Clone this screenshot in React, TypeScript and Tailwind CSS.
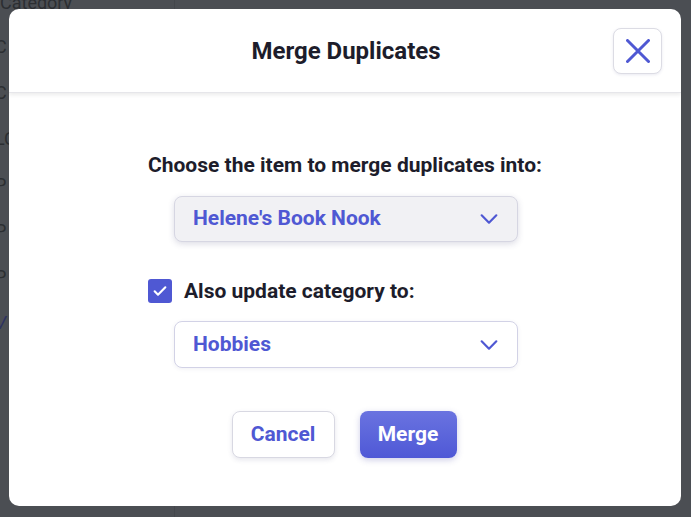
import React from "react";

const Chevron = () => (
  <svg width="22" height="22" viewBox="0 0 24 24" fill="none" stroke="#4f58d3" strokeWidth="2.4" strokeLinecap="round" strokeLinejoin="round">
    <path d="M4 8l8 8 8-8" />
  </svg>
);

export default function App() {
  const font = { fontFamily: "Roboto, 'Noto Sans', sans-serif" };
  return (
    <div className="relative h-[517px] w-[691px] overflow-hidden bg-[#4b4e53]" style={font}>
      {/* background page under overlay */}
      <div className="flex h-full">
        <div className="flex w-[175px] flex-col border-r border-[#44474c] text-[18px] text-[#2c2e32]">
          <div className="-mt-[9px] leading-[24px]">Category</div>
          <div className="-ml-[5px] mt-[20px] flex flex-col gap-[22px] leading-[24px]">
            <span>C</span>
            <span>C</span>
            <span>LC</span>
            <span>P</span>
            <span>P</span>
            <span>P</span>
            <span className="italic text-[#2d3160]">V</span>
          </div>
        </div>
        <div className="flex-1" />
      </div>

      {/* modal */}
      <div className="absolute left-[9px] top-[9px] flex h-[497px] w-[672px] flex-col overflow-hidden rounded-[10px] bg-white">
        <div className="grid h-[84px] shrink-0 grid-cols-[1fr_auto_1fr] items-center border-b border-[#e6e6ea] shadow-[0_2px_4px_rgba(0,0,0,0.08)]">
          <div />
          <div className="pl-[2px] text-[24px] font-bold leading-[30px] text-[#1d1d2b]">Merge Duplicates</div>
          <div className="flex justify-end pr-[19px]">
            <button className="flex h-[46px] w-[49px] items-center justify-center rounded-[8px] border border-[#dcdce4] bg-white shadow-[0_1px_3px_rgba(80,80,140,0.12)]">
              <svg width="24" height="24" viewBox="0 0 24 24" fill="none" stroke="#4f58d3" strokeWidth="3" strokeLinecap="round">
                <path d="M1.5 1.5l21 21M22.5 1.5l-21 21" />
              </svg>
            </button>
          </div>
        </div>

        <div className="flex flex-1 flex-col items-center pt-[59px]">
          <div className="flex w-[394px] flex-col">
            <div className="whitespace-nowrap text-[21px] font-bold leading-[26px] text-[#1d1d2b]">Choose the item to merge duplicates into:</div>
            <div className="ml-[26px] mt-[18px] flex h-[46px] w-[344px] items-center justify-between rounded-[8px] border border-[#d6d6e2] bg-[#f1f1f4] pl-[18px] pr-[17px] shadow-[0_2px_6px_rgba(60,60,110,0.18)]">
              <span className="text-[21px] font-bold text-[#4f58d3]">Helene's Book Nook</span>
              <Chevron />
            </div>
            <div className="mt-[37px] flex h-[24px] items-center gap-[12px]">
              <div className="flex h-[24px] w-[24px] items-center justify-center rounded-[3px] bg-[#4f58d3]">
                <svg width="16" height="16" viewBox="0 0 24 24" fill="none" stroke="white" strokeWidth="3.2" strokeLinecap="round" strokeLinejoin="round">
                  <path d="M4 12.5l5 5L20 6.5" />
                </svg>
              </div>
              <span className="whitespace-nowrap text-[21px] font-bold leading-[24px] text-[#1d1d2b]">Also update category to:</span>
            </div>
            <div className="ml-[26px] mt-[18px] flex h-[47px] w-[344px] items-center justify-between rounded-[8px] border border-[#d2d2e6] bg-white pl-[18px] pr-[17px] shadow-[0_1px_4px_rgba(60,60,110,0.08)]">
              <span className="text-[21px] font-bold text-[#4f58d3]">Hobbies</span>
              <Chevron />
            </div>
          </div>
          <div className="mt-[43px] flex gap-[25px] pr-[2px]">
            <button className="h-[47px] w-[103px] rounded-[8px] border border-[#d8d8e2] bg-white text-[21px] font-bold text-[#4f58d3] shadow-[0_2px_5px_rgba(60,60,110,0.12)]">Cancel</button>
            <button className="h-[47px] w-[97px] rounded-[8px] bg-gradient-to-b from-[#6a73e0] to-[#4f58d6] text-[21px] font-bold text-white shadow-[0_2px_6px_rgba(60,60,160,0.25)]">Merge</button>
          </div>
        </div>
      </div>
    </div>
  );
}
